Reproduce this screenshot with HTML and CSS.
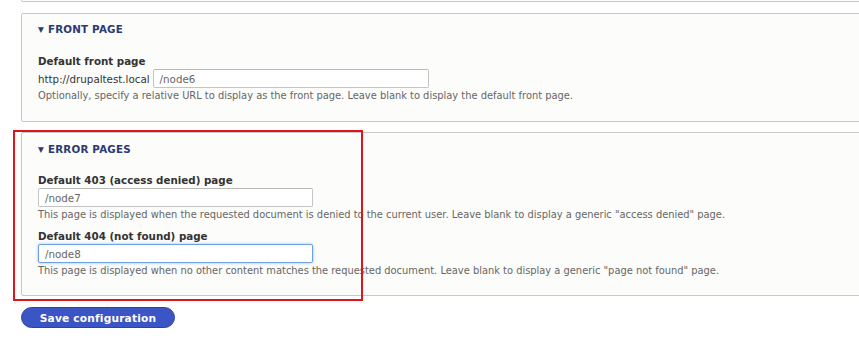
FILE: index.html
```html
<!DOCTYPE html>
<html>
<head>
<meta charset="utf-8">
<link rel="stylesheet" href="styles.css">
</head>
<body>
<div class="page">
  <div class="prev-fieldset"></div>

  <div class="fieldset front">
    <div class="legend"><span class="arrow">▼</span>FRONT PAGE</div>
    <div class="item">
      <div class="label">Default front page</div>
      <div class="prefix-row">
        <span class="prefix">http://drupaltest.local</span>
        <span class="input input-front">/node6</span>
      </div>
      <div class="description">Optionally, specify a relative URL to display as the front page. Leave blank to display the default front page.</div>
    </div>
  </div>

  <div class="fieldset error">
    <div class="legend"><span class="arrow">▼</span>ERROR PAGES</div>
    <div class="item">
      <div class="label">Default 403 (access denied) page</div>
      <div class="input input-error">/node7</div>
      <div class="description">This page is displayed when the requested document is denied to the current user. Leave blank to display a generic "access denied" page.</div>
    </div>
    <div class="item item-second">
      <div class="label">Default 404 (not found) page</div>
      <div class="input input-error focused">/node8</div>
      <div class="description">This page is displayed when no other content matches the requested document. Leave blank to display a generic "page not found" page.</div>
    </div>
  </div>

  <div class="actions">
    <button class="button-primary">Save configuration</button>
  </div>

  <div class="highlight"></div>
</div>
</body>
</html>
```

FILE: styles.css
```css
html, body {
  margin: 0;
  padding: 0;
  background: #ffffff;
  overflow: hidden;
}
body {
  font-family: "DejaVu Sans", Verdana, sans-serif;
  font-size: 10.3px;
  color: #333333;
}
.page {
  position: relative;
  padding-left: 21px;
  margin-right: -30px;
}
.prev-fieldset {
  height: 1px;
  border: 1px solid #c8c8c8;
  border-top: none;
  border-radius: 0 0 2px 2px;
  background: #fcfcfa;
}
.fieldset {
  border: 1px solid #c8c8c8;
  border-radius: 2px;
  background: #fcfcfa;
  padding-left: 16px;
}
.front {
  margin-top: 11px;
  padding-top: 7px;
  padding-bottom: 17px;
}
.error {
  margin-top: 10px;
  padding-top: 8px;
  padding-bottom: 16px;
}
.legend {
  line-height: 16px;
  font-weight: bold;
  color: #2b3a73;
  letter-spacing: 0.2px;
}
.arrow {
  font-size: 7.5px;
  display: inline-block;
  margin-right: 4px;
  vertical-align: 1px;
}
.front .item {
  margin-top: 15px;
}
.error .item {
  margin-top: 14px;
}
.error .item-second {
  margin-top: 5px;
}
.label {
  font-weight: bold;
  line-height: 16px;
  color: #333333;
}
.prefix-row {
  display: flex;
  align-items: center;
}
.prefix {
  margin-right: 3px;
}
.input {
  box-sizing: border-box;
  display: flex;
  align-items: center;
  height: 19px;
  padding: 0 6px;
  border: 1px solid #c4c4c4;
  border-top-color: #b9b9b9;
  border-radius: 2px;
  background: #ffffff;
  color: #666666;
  font-size: 10.3px;
}
.input-front {
  width: 276px;
}
.input-error {
  width: 275px;
}
.focused {
  border-color: #6ea2e6;
  box-shadow: 0 0 3px rgba(80, 150, 240, 0.6);
}
.description {
  font-size: 9.9px;
  line-height: 16px;
  color: #666666;
}
.actions {
  margin-top: 11px;
}
.button-primary {
  box-sizing: border-box;
  height: 21px;
  width: 154px;
  padding: 0;
  border: 1px solid #2d43a5;
  border-radius: 11px;
  background: #3b55c5;
  color: #ffffff;
  font-family: "DejaVu Sans", Verdana, sans-serif;
  font-weight: bold;
  font-size: 10.6px;
  letter-spacing: 0.2px;
}
.highlight {
  position: absolute;
  left: 13px;
  top: 130px;
  width: 346px;
  height: 167px;
  border: 2px solid #e0151c;
}
```
